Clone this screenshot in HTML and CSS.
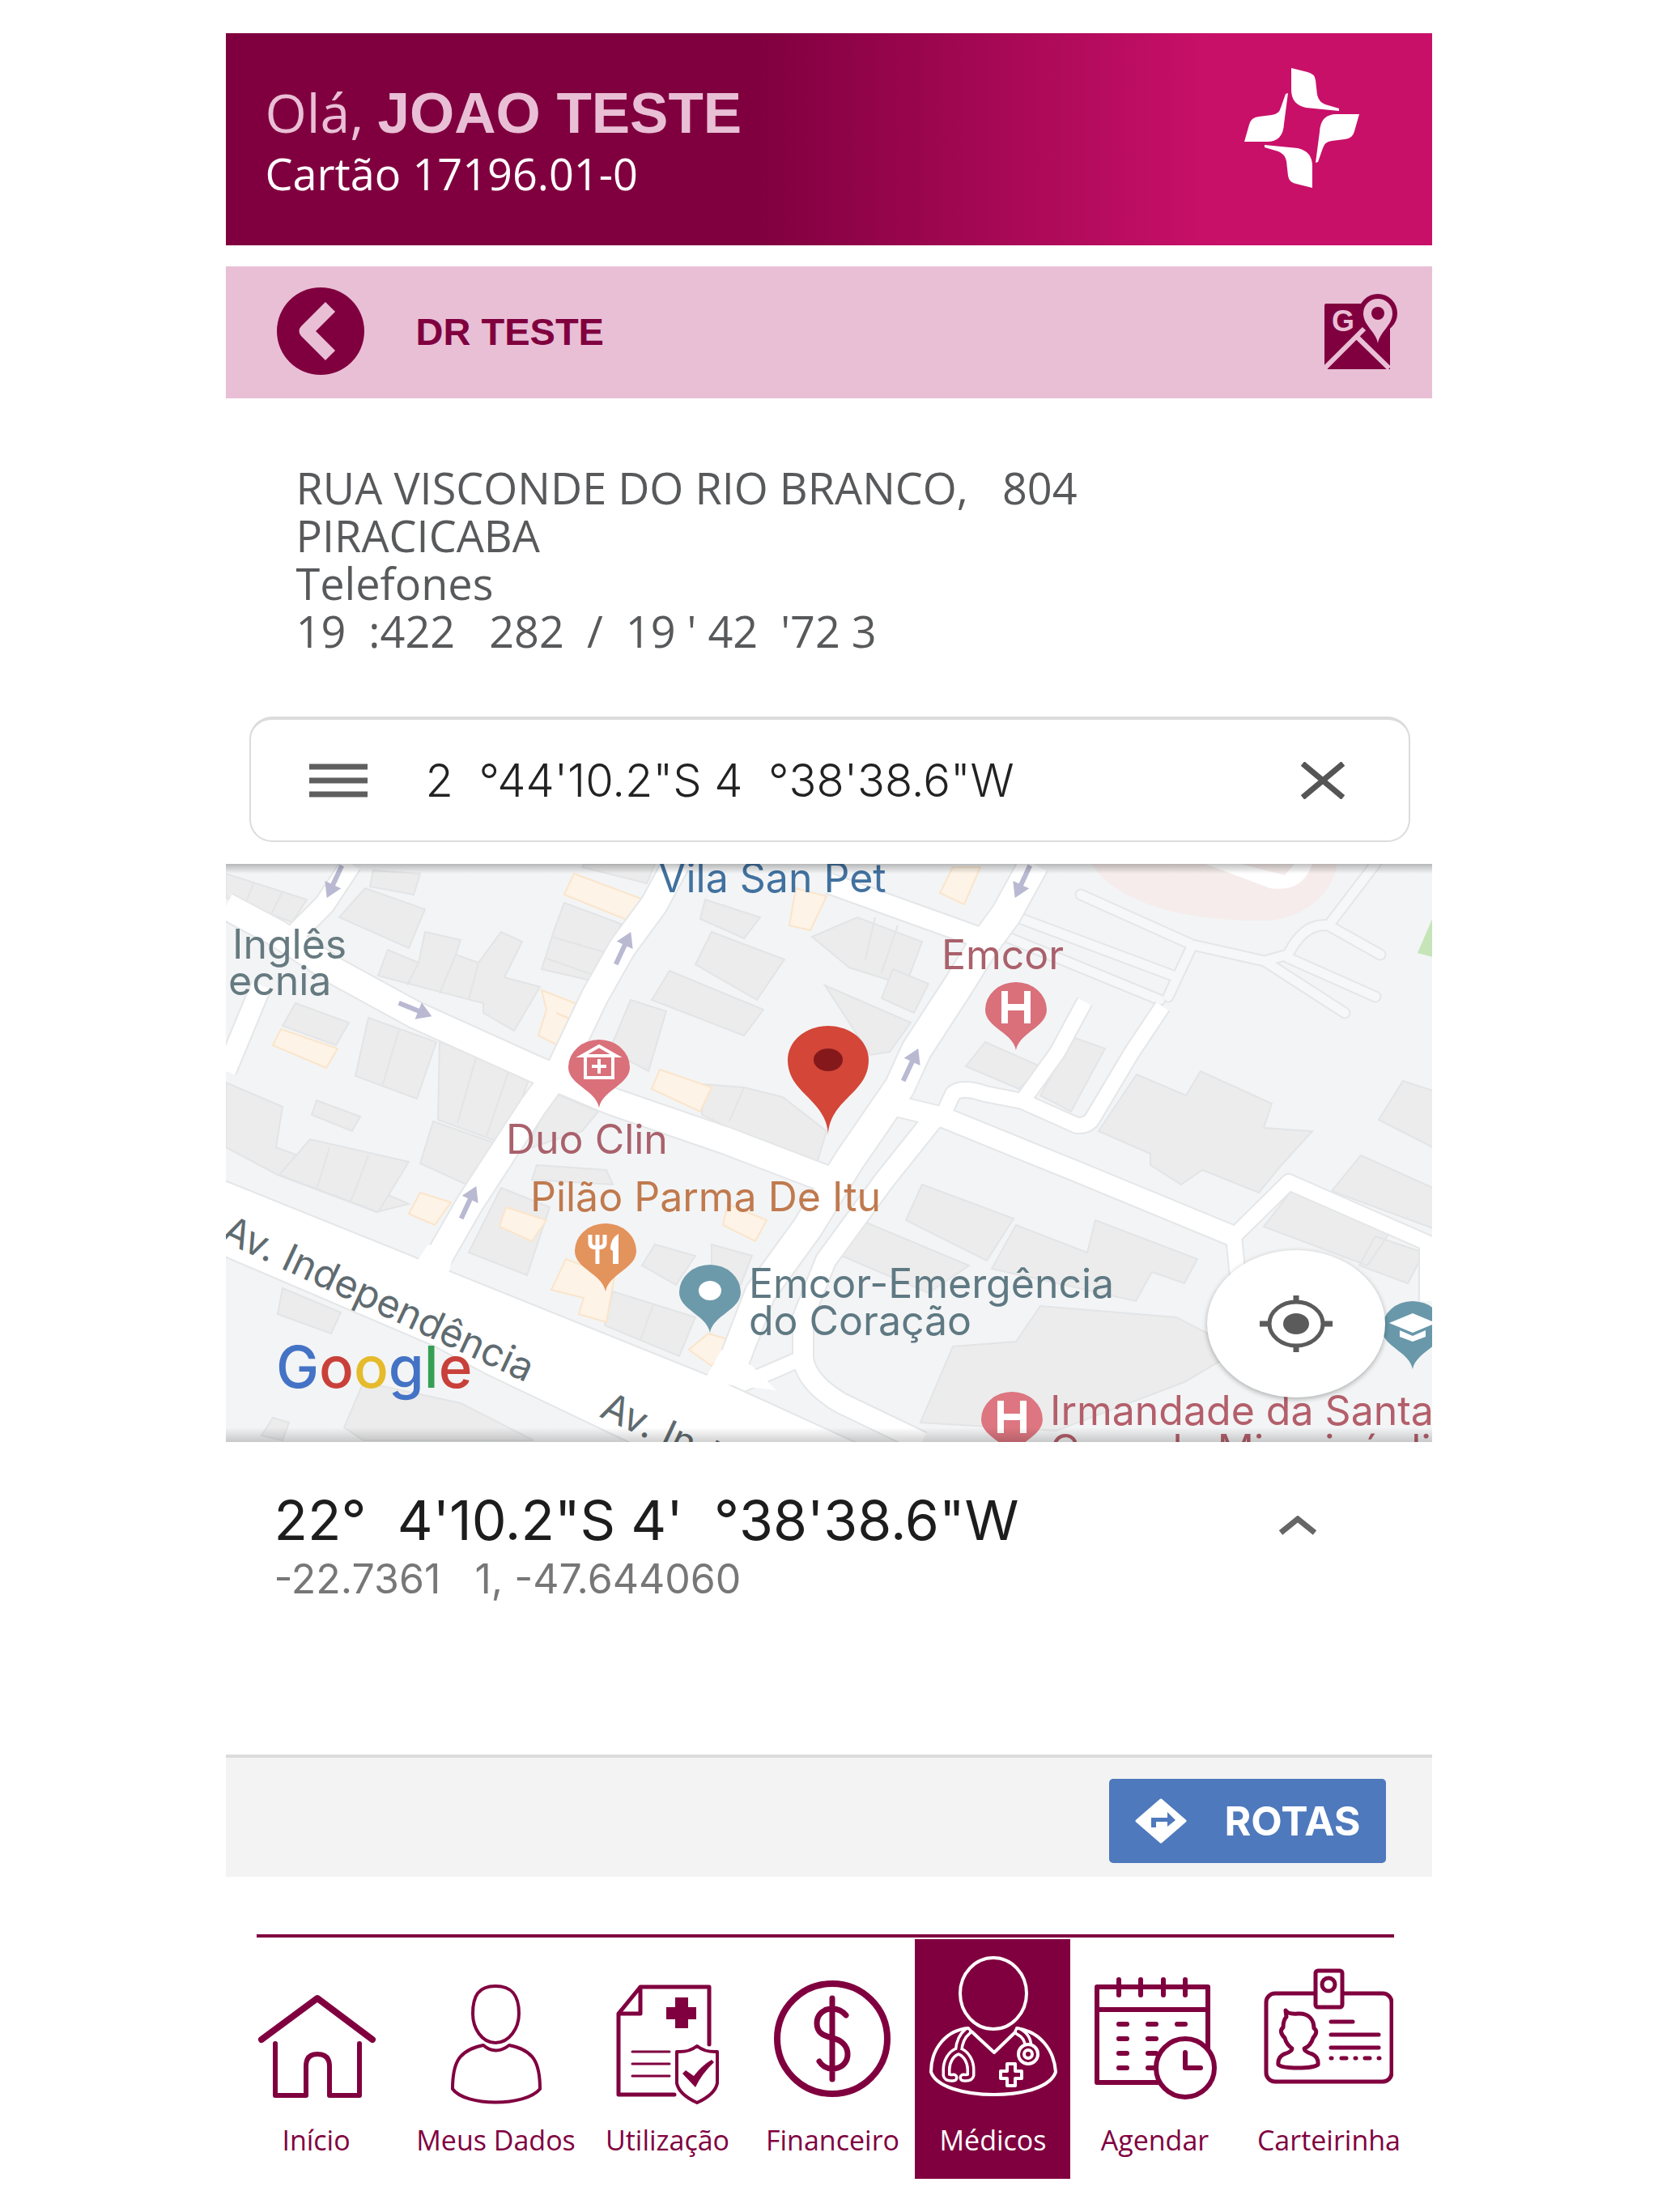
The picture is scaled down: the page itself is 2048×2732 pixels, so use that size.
FILE: index.html
```html
<!DOCTYPE html>
<html lang="pt-BR">
  <head>
    <meta charset="utf-8">
    <title>Médicos</title>
    <link rel="stylesheet" href="styles.css">
  </head>
  <body>
    <div class="app">
      <header class="header">
        <div>
          <p class="greeting">Olá, <b class="user-name">JOAO TESTE</b></p>
          <p class="card-number">Cartão 17196.01-0</p>
        </div>
        <svg class="logo" viewBox="0 0 143 151" fill="white">
          <path d="M58 1 L78 6 Q87 8 88 16 L90 34 Q92 43 100 46 L117 51 L117 54 L76 50 Q58 46 58 28Z"/>
          <path d="M54 32 L51 33 L45 50 Q43 58 34 59 L18 61 Q8 62 6 71 L0 92 H28 Q48 92 49 70Z"/>
          <g transform="rotate(180 71 75)">
            <path d="M58 1 L78 6 Q87 8 88 16 L90 34 Q92 43 100 46 L117 51 L117 54 L76 50 Q58 46 58 28Z"/>
            <path d="M54 32 L51 33 L45 50 Q43 58 34 59 L18 61 Q8 62 6 71 L0 92 H28 Q48 92 49 70Z"/>
          </g>
        </svg>
      </header>

      <div class="doctor-bar">
        <button class="back-button" aria-label="Voltar">
          <svg viewBox="0 0 108 108">
            <path d="M66 24 L36 54 L66 84" fill="none" stroke="#e9bfd6" stroke-width="17" stroke-linejoin="round"/>
          </svg>
        </button>
        <h1 class="doctor-name">DR TESTE</h1>
        <a class="map-link" href="#mapa" aria-label="Abrir no mapa">
          <svg viewBox="0 0 92 94">
            <path d="M2 13 H82 V94 H5 L1 90 V15Z" fill="#80003f"/>
            <circle cx="67" cy="25" r="24" fill="#80003f"/>
            <path d="M2 92 L50 44 M41 54 L81 93" fill="none" stroke="#e9bfd6" stroke-width="6"/>
            <path d="M67 62 C65 48 49 40 49 25 A18 18 0 0 1 85 25 C85 40 69 48 67 62Z" fill="#e9bfd6"/>
            <circle cx="67" cy="25" r="8" fill="#80003f"/>
            <text class="map-link-letter" x="10" y="47">G</text>
          </svg>
        </a>
      </div>

      <address class="address">RUA VISCONDE DO RIO BRANCO,   804
PIRACICABA
Telefones
19  :422   282  /  19 ' 42  '72 3</address>

      <div class="search">
        <button class="icon-button" aria-label="Menu">
          <svg class="menu-icon" viewBox="0 0 72 42" stroke="#5f5f5f" stroke-width="7">
            <path d="M0 4 H72 M0 21 H72 M0 38 H72"/>
          </svg>
        </button>
        <input class="search-input" type="text" aria-label="Buscar local" value="2  °44'10.2&quot;S 4  °38'38.6&quot;W">
        <button class="icon-button" aria-label="Limpar">
          <svg class="close-icon" viewBox="0 0 54 46" stroke="#555" stroke-width="7">
            <path d="M2 2 L52 44 M52 2 L2 44"/>
          </svg>
        </button>
      </div>

      <section class="map" id="mapa">
        <svg class="map-drawing" viewBox="0 0 1491 714">
          <defs>
            <path id="pin" d="M0 84 C-4 62 -38 56 -38 34 A38 34 0 0 1 38 34 C38 56 4 62 0 84Z"/>
            <path id="arrow" d="M-3 22 V-4 H-11 L0 -22 L11 -4 H3 V22Z" fill="#b9b9d2"/>
            <linearGradient id="fade-down" x2="0" y2="1">
              <stop offset="0" stop-color="#000" stop-opacity=".25"/>
              <stop offset="1" stop-color="#000" stop-opacity="0"/>
            </linearGradient>
            <linearGradient id="fade-up" x2="0" y2="1">
              <stop offset="0" stop-color="#000" stop-opacity="0"/>
              <stop offset="1" stop-color="#000" stop-opacity=".18"/>
            </linearGradient>
          </defs>

          <rect width="1491" height="714" fill="#f3f4f5"/>

          <!-- stadium and park -->
          <path d="M1070 0 C1100 50 1190 72 1290 70 C1340 64 1370 30 1372 0Z" fill="#f5eceb"/>
          <path d="M1210 0 L1290 30 Q1330 36 1342 0 H1320 L1308 14 L1254 0Z" fill="#fff"/>
          <path d="M1491 66 L1472 110 L1491 115Z" fill="#c5e5b9"/>

          <!-- buildings -->
          <g fill="#ececec" stroke="#e2e4e6" stroke-width="2">
            <path d="M0 12 L100 44 L82 72 L0 42Z M34 24 L24 50 M70 34 L56 62"/>
            <path d="M182 8 L240 12 L232 38 L178 28Z M172 30 L246 56 L226 104 L140 66Z"/>
            <path d="M200 106 L238 122 L246 84 L290 94 L284 112 L312 122 L340 84 L366 96 L344 140 L388 152 L356 206 L318 184 L318 172 L188 138Z M238 122 L224 150 M284 112 L264 160 M312 122 L300 168"/>
            <path d="M418 48 L488 74 L460 146 L390 130 L406 80 Z M402 90 L478 112 M394 116 L462 140"/>
            <path d="M442 0 H530 L520 24 L440 4Z"/>
            <path d="M592 44 L660 66 L640 92 L586 68Z M600 84 L690 118 L656 168 L580 124Z"/>
            <path d="M548 132 L664 180 L640 212 L526 168Z M500 168 L544 182 L522 256 L474 230Z"/>
            <path d="M724 90 L780 66 L860 96 L840 150 L770 128Z M802 66 L790 118 M830 76 L810 134"/>
            <path d="M824 130 L868 148 L850 184 L810 166Z M740 150 L800 176 L846 196 L820 232 L796 236Z"/>
            <path d="M86 172 L152 196 L136 224 L70 200Z M176 190 L260 220 L236 290 L160 262Z M214 204 L194 272"/>
            <path d="M264 220 L376 262 L344 346 L262 316Z M310 236 L286 320 M350 254 L322 336"/>
            <path d="M0 270 L70 300 L62 350 L100 364 L226 420 L186 430 L64 384 L0 350Z M112 292 L166 312 L156 330 L106 310Z"/>
            <path d="M66 384 L104 340 L226 368 L188 430Z M128 350 L112 402 M176 360 L154 418"/>
            <path d="M256 318 L336 346 L306 400 L240 370Z"/>
            <path d="M404 282 L460 306 L440 330 L372 352Z M384 372 L470 378 L478 396 L378 390Z"/>
            <path d="M590 272 L640 276 L688 288 L742 330 L730 370 L650 340 L588 310Z M640 276 L622 318"/>
            <path d="M340 400 L400 424 L372 508 L300 480Z M530 470 L580 484 L556 520 L514 496Z M600 470 L650 484 L636 520 L600 506Z"/>
            <path d="M478 528 L580 560 L560 608 L468 570Z M528 544 L512 588"/>
            <path d="M70 524 L142 554 L130 580 L64 556Z M170 640 L290 666 L380 712 H170 L146 696Z M58 684 L78 690 L70 712 L44 706Z"/>
            <path d="M1125 260 L1186 286 L1204 256 L1292 296 L1282 326 L1342 330 L1304 372 L1276 406 L1206 378 L1180 396 L1142 372 L1142 358 L1078 330Z"/>
            <path d="M1454 268 L1491 280 V350 L1424 316Z M1402 360 L1491 400 V450 L1366 404Z"/>
            <path d="M1316 404 L1440 452 L1410 496 L1282 448Z M1420 460 L1480 480 L1460 518 L1400 496Z"/>
            <path d="M938 220 L1006 250 L980 278 L914 250Z M1046 214 L1086 228 L1044 306 L1006 286Z"/>
            <path d="M860 396 L973 438 L940 490 L840 440Z M784 440 L918 496 L868 530 L756 482Z"/>
            <path d="M976 446 L1064 480 L1074 440 L1200 488 L1184 518 L1144 504 L1124 540 L946 500Z"/>
            <path d="M1006 546 L1174 560 L1252 600 L1184 640 L1026 700 L858 690 L898 596 L976 590Z"/>
          </g>

          <!-- commercial buildings -->
          <g fill="#fdf3e6" stroke="#fae5cb" stroke-width="2">
            <path d="M430 12 L516 44 L498 70 L418 38Z M390 156 L442 176 L430 194 L408 184 L432 194 L414 226 L386 212 L396 180Z"/>
            <path d="M68 204 L138 228 L124 252 L58 224Z M536 254 L600 276 L586 306 L526 278Z"/>
            <path d="M704 30 L742 40 L722 82 L696 76Z M898 4 H932 L912 50 L882 36Z"/>
            <path d="M240 406 L278 418 L258 446 L226 432Z M346 424 L396 440 L378 466 L338 448Z"/>
            <path d="M420 488 L480 510 L470 566 L436 556 L442 536 L402 526Z M596 580 L630 590 L600 620 L572 600Z M620 420 L668 440 L654 466 L614 446Z"/>
          </g>

          <!-- parking lanes -->
          <g fill="none" stroke-linecap="round" stroke-linejoin="round">
            <path stroke="#e4e6e8" stroke-width="15" d="M1056 38 L1194 100 L1283 120 L1312 112 Q1332 72 1362 76 L1420 0 M1362 76 L1426 112 M1283 120 L1382 184 M1312 116 L1420 164 M1194 100 L1164 164 M978 66 L1170 138 M964 90 L1154 168"/>
            <path stroke="#f6f7f8" stroke-width="11" d="M1056 38 L1194 100 L1283 120 L1312 112 Q1332 72 1362 76 L1420 0 M1362 76 L1426 112 M1283 120 L1382 184 M1312 116 L1420 164 M1194 100 L1164 164 M978 66 L1170 138 M964 90 L1154 168"/>
          </g>

          <!-- street edges, then the streets -->
          <g fill="none" stroke="#e4e6e8" stroke-linejoin="round">
            <path stroke-width="36" d="M255 500 L301 420 L379 300 L413 253 L456 163 L490 103 L529 50 L556 0"/>
            <path stroke-width="36" d="M0 52 L64 86 L136 133 L233 186 L379 252 L476 293 L621 343 L752 393"/>
            <path stroke-width="40" d="M998 0 L964 62 L934 103 L905 150 L853 230 L832 276 L770 366 L718 450 L660 530 L610 660"/>
            <path stroke-width="28" d="M745 24 L934 92 M155 0 L122 50 L76 96 M44 150 L0 256"/>
            <path stroke-width="28" d="M832 300 L886 313 L1051 380 L1245 460 M878 310 L814 390 L741 490 L713 560 V610 Q716 640 760 666 L860 714"/>
            <path stroke-width="22" d="M1245 460 L1313 393 L1484 468 V540 M1245 460 L1250 510 M886 310 L898 284 Q908 274 938 284 L984 293 L1051 323 Q1066 324 1072 312 L1119 233 L1157 176 M986 290 L1027 233 L1061 170 M713 610 L620 650"/>
          </g>
          <g fill="none" stroke="#fff" stroke-linejoin="round">
            <path stroke-width="32" d="M255 500 L301 420 L379 300 L413 253 L456 163 L490 103 L529 50 L556 0"/>
            <path stroke-width="32" d="M0 52 L64 86 L136 133 L233 186 L379 252 L476 293 L621 343 L752 393"/>
            <path stroke-width="36" d="M998 0 L964 62 L934 103 L905 150 L853 230 L832 276 L770 366 L718 450 L660 530 L610 660"/>
            <path stroke-width="24" d="M745 24 L934 92 M155 0 L122 50 L76 96 M44 150 L0 256"/>
            <path stroke-width="24" d="M832 300 L886 313 L1051 380 L1245 460 M878 310 L814 390 L741 490 L713 560 V610 Q716 640 760 666 L860 714"/>
            <path stroke-width="18" d="M1245 460 L1313 393 L1484 468 V540 M1245 460 L1250 510 M886 310 L898 284 Q908 274 938 284 L984 293 L1051 323 Q1066 324 1072 312 L1119 233 L1157 176 M986 290 L1027 233 L1061 170 M713 610 L620 650"/>
          </g>
          <path d="M-4 390 L602 634 L790 720 H510 L321 630 L258 596 L-4 484Z" fill="#fff" stroke="#e4e6e8" stroke-width="2"/>
          <path d="M230 500 L250 470 L282 480 L274 510Z M590 640 L612 600 L650 620 L680 650Z" fill="#fff"/>

          <use href="#arrow" transform="translate(134 22) rotate(205)"/>
          <use href="#arrow" transform="translate(234 180) rotate(112)"/>
          <use href="#arrow" transform="translate(491 104) rotate(25)"/>
          <use href="#arrow" transform="translate(300 418) rotate(25)"/>
          <use href="#arrow" transform="translate(984 22) rotate(205)"/>
          <use href="#arrow" transform="translate(846 248) rotate(25)"/>

          <!-- street and place names -->
          <g class="place">
            <text x="534" y="35" fill="#41719f">Vila San Pet</text>
            <text x="8" y="117" fill="#667a80">Inglês</text>
            <text x="3" y="162" fill="#667a80">ecnia</text>
            <text x="884" y="130" fill="#a9616c">Emcor</text>
            <text x="346" y="358" fill="#a9616c">Duo Clin</text>
            <text x="376" y="429" fill="#c07a4e">Pilão Parma De Itu</text>
            <text x="646" y="536" fill="#5f7983">Emcor-Emergência</text>
            <text x="646" y="582" fill="#5f7983">do Coração</text>
            <text x="1018" y="693" fill="#b35f6b">Irmandade da Santa</text>
            <text x="1018" y="741" fill="#b35f6b">Casa de Misericórdia de</text>
          </g>
          <g class="street">
            <text transform="translate(-8 464) rotate(25)">Av. Independência</text>
            <text transform="translate(460 682) rotate(25)">Av. Independência</text>
          </g>
          <text class="google" x="62" y="647"><tspan fill="#4473c5">G</tspan><tspan fill="#c9403a">o</tspan><tspan fill="#e5bb2c">o</tspan><tspan fill="#4473c5">g</tspan><tspan fill="#35a053">l</tspan><tspan fill="#c9403a">e</tspan></text>

          <!-- place pins -->
          <g transform="translate(461 217)">
            <use href="#pin" fill="#d9707a"/>
            <path d="M-17 18 V47 H17 V18 M-21 20 L0 8 L21 20Z M0 24 V42 M-9 33 H9" fill="none" stroke="#fff" stroke-width="4"/>
          </g>
          <g transform="translate(976 146)">
            <use href="#pin" fill="#d9707a"/>
            <path d="M-14 11 V51 M14 11 V51 M-14 31 H14" stroke="#fff" stroke-width="8"/>
          </g>
          <g transform="translate(971 652)">
            <use href="#pin" fill="#dd7680"/>
            <path d="M-14 11 V51 M14 11 V51 M-14 31 H14" stroke="#fff" stroke-width="8"/>
          </g>
          <g transform="translate(469 444)">
            <use href="#pin" fill="#e3935c"/>
            <path d="M-19 14 V24 Q-19 30 -10 30 Q-1 30 -1 24 V14 M-10 14 V50" fill="none" stroke="#fff" stroke-width="5"/>
            <path d="M16 13 V50 H9 V34 L6 32 Q6 18 16 13Z" fill="#fff"/>
          </g>
          <g transform="translate(598 495)">
            <use href="#pin" fill="#6d9aab"/>
            <ellipse cy="32" rx="14" ry="12" fill="#fff"/>
          </g>
          <g transform="translate(1466 540)">
            <use href="#pin" fill="#6898aa"/>
            <path d="M-29 27 L0 15 L29 27 L0 39Z M-16 36 L0 43 L16 36 V44 L0 50 L-16 44Z" fill="#fff"/>
          </g>
          <path d="M744 335 C742 290 694 284 694 242 A50 42 0 0 1 794 242 C794 284 746 290 744 335Z" fill="#d34638"/>
          <ellipse cx="744" cy="242" rx="18" ry="14" fill="#85181b"/>

          <rect width="1491" height="12" fill="url(#fade-down)"/>
          <rect y="696" width="1491" height="18" fill="url(#fade-up)"/>
        </svg>
        <button class="locate-button" aria-label="Minha localização">
          <svg viewBox="0 0 90 70" fill="none" stroke="#5b5b5b">
            <ellipse cx="45" cy="35" rx="33" ry="27" stroke-width="5"/>
            <path d="M0 35 H12 M78 35 H90 M45 0 V8 M45 62 V70" stroke-width="7"/>
            <ellipse cx="45" cy="35" rx="16" ry="13" fill="#5b5b5b" stroke="none"/>
          </svg>
        </button>
      </section>

      <section class="place-details">
        <div>
          <h2 class="coordinates">22°  4'10.2"S 4'  °38'38.6"W</h2>
          <p class="decimal">-22.7361   1, -47.644060</p>
        </div>
        <button class="expand-button" aria-label="Expandir">
          <svg viewBox="0 0 48 24" fill="none" stroke="#666" stroke-width="7">
            <path d="M3 21 L24 4 L45 21"/>
          </svg>
        </button>
      </section>

      <div class="actions">
        <button class="routes-button">
          <svg class="routes-icon" viewBox="0 0 64 56">
            <path d="M32 2 L62 28 L32 54 L2 28Z" fill="white" stroke="white" stroke-width="3" stroke-linejoin="round"/>
            <path d="M20 36 V24 H40 V17 L50 27 L40 35 V29 H26 V36Z" fill="#4e79bd"/>
          </svg>
          ROTAS
        </button>
      </div>

      <nav class="tabs">
        <a class="tab" href="#inicio">
          <svg class="tab-icon" viewBox="0 0 160 220">
            <path d="M12 124 L81 73 L149 124" stroke-width="8"/>
            <path d="M29 129 V193 H67 V157 Q67 142 81 142 Q96 142 96 157 V193 H133 V129" stroke-width="6"/>
          </svg>
          Início
        </a>
        <a class="tab" href="#dados">
          <svg class="tab-icon" viewBox="0 0 160 220" stroke-width="4">
            <path d="M79 58 C100 58 108 70 108 92 C108 110 96 128 79 128 C62 128 51 110 51 92 C51 70 58 58 79 58Z"/>
            <path d="M64 131 Q79 144 96 131 C126 137 134 152 134 185 C116 207 42 207 26 185 C26 152 34 137 64 131Z"/>
          </svg>
          Meus Dados
        </a>
        <a class="tab" href="#utilizacao">
          <svg class="tab-icon" viewBox="0 0 160 220" stroke-width="5">
            <path d="M131 130 V59 H46 L19 92 V192 H88 M46 59 V92 H19"/>
            <path d="M36 139 H82 M36 154 H82 M36 169 H82" stroke-width="3"/>
            <path d="M89 72 H105 V84 H115 V99 H105 V110 H89 V99 H78 V84 H89Z" fill="#80003f" stroke="none"/>
            <path d="M116 132 Q106 140 91 139 V178 Q94 192 116 202 Q138 192 141 178 V139 Q126 140 116 132Z" stroke-width="4"/>
            <path d="M98 166 L102 162 L112 169 Q122 156 134 149 L137 152 Q122 166 114 183Z" fill="#80003f" stroke="none"/>
          </svg>
          Utilização
        </a>
        <a class="tab" href="#financeiro">
          <svg class="tab-icon" viewBox="0 0 160 220" stroke-width="7">
            <circle cx="80" cy="123" r="68" stroke-width="8"/>
            <path d="M80 73 V173 M97 94 C92 88 86 86 80 86 C68 86 61 94 61 104 C61 115 68 119 80 122 C92 125 99 132 99 142 C99 153 91 160 80 160 C73 160 67 156 64 151"/>
          </svg>
          Financeiro
        </a>
        <a class="tab tab-active" href="#medicos">
          <svg class="tab-icon" viewBox="0 0 160 220" stroke-width="4">
            <ellipse cx="81" cy="67" rx="41" ry="44"/>
            <path d="M50 110 C24 112 4 134 4 164 C10 182 44 192 82 192 C120 192 152 182 158 164 C156 136 138 114 110 110"/>
            <path d="M54 114 L82 140 L109 114"/>
            <g stroke-width="11">
              <path d="M49 114 C44 118 39 126 38 138 C28 141 23 152 23 161 V168 Q24 172 32 171 M38 138 C48 141 53 152 53 161 V168 Q52 172 44 171 M112 114 C120 118 124 124 124 133"/>
            </g>
            <g stroke="#80003f" stroke-width="4">
              <path d="M49 114 C44 118 39 126 38 138 C28 141 23 152 23 161 V168 Q24 172 32 171 M38 138 C48 141 53 152 53 161 V168 Q52 172 44 171 M112 114 C120 118 124 124 124 133"/>
            </g>
            <circle cx="124" cy="142" r="12" fill="#80003f"/>
            <circle cx="124" cy="142" r="5"/>
            <path d="M98 154 h10 v9 h8 v9 h-8 v9 h-10 v-9 h-8 v-9 h8Z"/>
          </svg>
          Médicos
        </a>
        <a class="tab" href="#agendar">
          <svg class="tab-icon" viewBox="0 0 160 220" stroke-width="6">
            <path d="M9 59 H146 V177 H9Z M9 87 H146 M36 50 V69 M63 50 V69 M91 50 V69 M118 50 V69"/>
            <path d="M36 105 H46 M72 105 H82 M108 105 H118 M36 123 H46 M72 123 H82 M36 141 H46 M72 141 H82 M36 159 H46 M72 159 H82"/>
            <circle cx="118" cy="159" r="36" fill="white"/>
            <path d="M118 140 V159 H137"/>
          </svg>
          Agendar
        </a>
        <a class="tab" href="#carteirinha">
          <svg class="tab-icon" viewBox="0 0 160 220" stroke-width="5">
            <rect x="3" y="67" width="155" height="109" rx="11"/>
            <rect x="64" y="39" width="33" height="45" rx="3" fill="white"/>
            <circle cx="80" cy="56" r="8"/>
            <path d="M27 88 Q30 93 42 92 C56 91 62 100 62 110 Q68 114 61 122 Q58 132 50 135 Q50 139 60 142 Q68 146 67 155 Q62 159 42 159 Q22 159 18 155 Q17 146 25 142 Q35 139 35 135 Q28 130 26 122 Q18 114 24 109 Q24 100 28 96Z"/>
            <path d="M83 102 H110 M83 118 H142 M83 134 H142 M83 147 H84 M96 147 H102 M113 147 H114 M125 147 H131 M142 147 H143"/>
          </svg>
          Carteirinha
        </a>
      </nav>
    </div>
  </body>
</html>
```
FILE: styles.css
```css
* {
  box-sizing: border-box;
}

body {
  margin: 0;
  background-color: white;
  font-family: "Open Sans", sans-serif;
}

button {
  padding: 0;
  border: none;
  background-color: transparent;
  cursor: pointer;
}

a {
  color: inherit;
  text-decoration: none;
}

svg {
  display: block;
}

h1,
h2,
p {
  margin: 0;
}

.app {
  width: 72.8%;
  margin: 0 auto;
  padding: 41px 0;
}

.header {
  display: flex;
  justify-content: space-between;
  align-items: flex-start;
  min-height: 262px;
  padding: 42px 89px 0 49px;
  background: linear-gradient(to right, #80003f 44%, #c91069 82%);
  line-height: 74px;
}

.header > div {
  padding-top: 18px;
}

.greeting {
  color: #e9bfd6;
  font-size: 66px;
}

.user-name {
  font-family: "Liberation Sans", Arial, sans-serif;
  font-size: 71px;
  font-weight: bold;
}

.card-number {
  color: white;
  font-size: 54px;
}

.logo {
  width: 143px;
}

.doctor-bar {
  display: flex;
  align-items: center;
  min-height: 163px;
  margin-top: 26px;
  padding: 0 42px 3px 63px;
  background-color: #e9bfd6;
}

.back-button {
  width: 108px;
  height: 108px;
  border-radius: 50%;
  background-color: #80003f;
}

.doctor-name {
  flex: 1;
  margin-left: 64px;
  color: #80003f;
  font-family: "Liberation Sans", Arial, sans-serif;
  font-size: 47px;
}

.map-link {
  width: 92px;
}

.map-link-letter {
  fill: #e9bfd6;
  font-family: "Liberation Sans", Arial, sans-serif;
  font-size: 36px;
  font-weight: bold;
}

.address {
  padding: 81px 87px 76px;
  color: #58595b;
  font-size: 54px;
  font-style: normal;
  line-height: 59px;
  white-space: pre-wrap;
}

.search {
  display: flex;
  align-items: center;
  min-height: 155px;
  margin: 0 27px 27px 29px;
  padding: 0 79px 0 72px;
  border: 2px solid #dcdcdc;
  border-top-width: 4px;
  border-radius: 28px;
}

.menu-icon {
  width: 72px;
}

.close-icon {
  width: 54px;
}

.search-input {
  flex: 1;
  min-width: 0;
  margin-left: 72px;
  padding: 0;
  border: none;
  outline: none;
  color: #222;
  font-family: Inter, Roboto, sans-serif;
  font-size: 56px;
  font-weight: 300;
}

.map {
  position: relative;
}

.map-drawing {
  width: 100%;
  height: auto;
}

.place,
.street {
  font-family: Inter, Roboto, sans-serif;
  font-size: 50px;
}

.street {
  fill: #5f6b70;
  font-size: 48px;
}

.google {
  font-family: Inter, Roboto, sans-serif;
  font-size: 71px;
  font-weight: 500;
}

.locate-button {
  display: flex;
  justify-content: center;
  align-items: center;
  position: absolute;
  right: 58px;
  bottom: 55px;
  width: 220px;
  height: 182px;
  border-radius: 50%;
  background-color: white;
  box-shadow: 0 2px 6px rgba(0, 0, 0, 0.3);
}

.locate-button svg {
  width: 90px;
}

.place-details {
  display: flex;
  justify-content: space-between;
  align-items: flex-start;
  min-height: 386px;
  padding: 56px 142px 0 60px;
  font-family: Inter, Roboto, sans-serif;
}

.coordinates,
.decimal {
  white-space: pre;
}

.coordinates {
  color: #1d1d1d;
  font-size: 68px;
  font-weight: 400;
  line-height: 80px;
}

.decimal {
  color: #777;
  font-size: 50px;
  line-height: 66px;
}

.expand-button {
  width: 48px;
  margin-top: 35px;
}

.actions {
  display: flex;
  justify-content: flex-end;
  padding: 26px 57px 17px 0;
  border-top: 4px solid #dcdcdc;
  background-color: #f3f3f3;
}

.routes-button {
  display: flex;
  align-items: center;
  gap: 46px;
  height: 104px;
  padding: 0 32px;
  border-radius: 5px;
  background-color: #4e79bd;
  color: white;
  font-family: Inter, Roboto, sans-serif;
  font-size: 50px;
  font-weight: bold;
}

.routes-icon {
  width: 64px;
}

.tabs {
  display: grid;
  grid-template-columns: 224fr 220fr 204fr 204fr 192fr 208fr 222fr;
  margin-top: 71px;
  padding-right: 17px;
}

.tabs::before {
  content: "";
  grid-column: 1 / -1;
  height: 4px;
  margin: 0 30px 2px 38px;
  background-color: #80003f;
}

.tab {
  display: flex;
  flex-direction: column;
  align-items: center;
  min-height: 296px;
  color: #80003f;
  font-size: 34px;
  line-height: 56px;
  white-space: nowrap;
}

.tab-icon {
  width: 160px;
  fill: none;
  stroke: currentColor;
  stroke-linecap: round;
  stroke-linejoin: round;
}

.tab-active {
  background-color: #80003f;
  color: white;
}
```
